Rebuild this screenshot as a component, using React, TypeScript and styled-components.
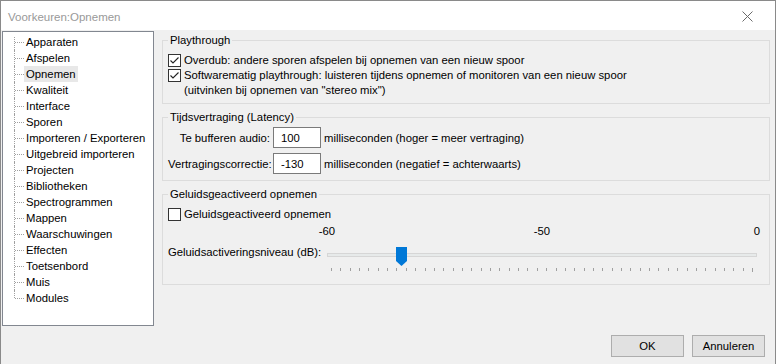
import styled, { createGlobalStyle } from 'styled-components'

const GlobalStyle = createGlobalStyle`
    html, body {
        margin: 0;
        padding: 0;
    }
    body {
        width: 776px;
        height: 364px;
        overflow: hidden;
        background: #f0f0f0;
        font-family: "Liberation Sans", Arial, sans-serif;
        font-size: 11.3px;
        color: #000;
    }
`

const treeItems = [
    'Apparaten',
    'Afspelen',
    'Opnemen',
    'Kwaliteit',
    'Interface',
    'Sporen',
    'Importeren / Exporteren',
    'Uitgebreid importeren',
    'Projecten',
    'Bibliotheken',
    'Spectrogrammen',
    'Mappen',
    'Waarschuwingen',
    'Effecten',
    'Toetsenbord',
    'Muis',
    'Modules',
]

type Place = 'first' | 'mid' | 'last'

const CheckBox: React.FC<{ checked?: boolean }> = ({ checked }) => (
    <BoxStyled>
        {checked && (
            <svg width="11" height="11" viewBox="0 0 11 11">
                <polyline points="1.5,5.5 4,8 9.5,2.5" fill="none" stroke="#222" strokeWidth="1.1" />
            </svg>
        )}
    </BoxStyled>
)

const Thumb = () => (
    <ThumbStyled style={{ left: '16%' }}>
        <svg width="11" height="19" viewBox="0 0 11 19">
            <path d="M0 0 H11 V14 L5.5 19 L0 14 Z" fill="#0078d7" />
        </svg>
    </ThumbStyled>
)

const Ticks = () => {
    const count = 46
    const step = 421 / (count - 1)
    return (
        <svg width="430" height="4" viewBox="0 0 430 4">
            {Array.from({ length: count }).map((_, i) => {
                const x = Math.round(4 + i * step) + 0.5
                return <line key={i} x1={x} x2={x} y1={0} y2={i === count - 1 ? 4 : 3} stroke="#a0a0a0" strokeWidth="1" />
            })}
        </svg>
    )
}

const App = () => {
    return (
        <>
            <GlobalStyle />
            <Window>
                <TitleBar>
                    <Title>Voorkeuren:Opnemen</Title>
                    <svg width="11" height="11" viewBox="0 0 11 11">
                        <path d="M0.5 0.5 L10.5 10.5 M10.5 0.5 L0.5 10.5" stroke="#6a6a6a" strokeWidth="1" />
                    </svg>
                </TitleBar>
                <Main>
                    <Tree>
                        {treeItems.map((item, idx) => {
                            const place: Place = idx === 0 ? 'first' : idx === treeItems.length - 1 ? 'last' : 'mid'
                            return (
                                <TreeRow key={item}>
                                    <Connector $place={place} />
                                    <TreeLabel $selected={item === 'Opnemen'}>{item}</TreeLabel>
                                </TreeRow>
                            )
                        })}
                    </Tree>
                    <Panel>
                        <Group>
                            <Legend>Playthrough</Legend>
                            <CheckList>
                                <CheckRow>
                                    <CheckBox checked />
                                    <CheckText>Overdub: andere sporen afspelen bij opnemen van een nieuw spoor</CheckText>
                                </CheckRow>
                                <CheckRow>
                                    <CheckBox checked />
                                    <CheckText>
                                        Softwarematig playthrough: luisteren tijdens opnemen of monitoren van een nieuw spoor
                                        <br />
                                        (uitvinken bij opnemen van "stereo mix")
                                    </CheckText>
                                </CheckRow>
                            </CheckList>
                        </Group>
                        <Group>
                            <Legend>Tijdsvertraging (Latency)</Legend>
                            <FieldGrid>
                                <FieldLabel>Te bufferen audio:</FieldLabel>
                                <Input defaultValue="100" />
                                <span>milliseconden (hoger = meer vertraging)</span>
                                <FieldLabel>Vertragingscorrectie:</FieldLabel>
                                <Input defaultValue="-130" />
                                <span>milliseconden (negatief = achterwaarts)</span>
                            </FieldGrid>
                        </Group>
                        <Group $last>
                            <Legend>Geluidsgeactiveerd opnemen</Legend>
                            <CheckList>
                                <CheckRow>
                                    <CheckBox />
                                    <CheckText>Geluidsgeactiveerd opnemen</CheckText>
                                </CheckRow>
                            </CheckList>
                            <LevelGrid>
                                <span />
                                <Scale>
                                    <ScaleMark>-60</ScaleMark>
                                    <ScaleMark>-50</ScaleMark>
                                    <ScaleMark>0</ScaleMark>
                                </Scale>
                                <LevelLabel>Geluidsactiveringsniveau (dB):</LevelLabel>
                                <Slider>
                                    <TrackArea>
                                        <Track />
                                        <Thumb />
                                    </TrackArea>
                                    <Ticks />
                                </Slider>
                            </LevelGrid>
                        </Group>
                    </Panel>
                </Main>
                <Footer>
                    <Button>OK</Button>
                    <Button>Annuleren</Button>
                </Footer>
            </Window>
        </>
    )
}

export default App

const Window = styled.div`
    width: 776px;
    height: 364px;
    box-sizing: border-box;
    border: 1px solid #8a8a8a;
    border-bottom: none;
    background: #f0f0f0;
    display: flex;
    flex-direction: column;
`

const TitleBar = styled.div`
    height: 29px;
    flex-shrink: 0;
    background: #fff;
    display: flex;
    align-items: center;
    justify-content: space-between;
    padding: 2px 22px 0 7px;
    box-sizing: border-box;
`

const Title = styled.span`
    color: #999;
    font-size: 11.5px;
`

const Main = styled.div`
    height: 296px;
    display: flex;
    gap: 8px;
    padding: 0 5px 0 1px;
`

const Tree = styled.ul`
    margin: 1px 0 0;
    padding: 2px 0 0;
    list-style: none;
    width: 152px;
    height: 295px;
    box-sizing: border-box;
    flex-shrink: 0;
    background: #fff;
    border: 1px solid #828790;
`

const TreeRow = styled.li`
    height: 16px;
    display: flex;
    align-items: center;
`

const Connector = styled.span<{ $place: Place }>`
    position: relative;
    width: 10px;
    height: 16px;
    margin-left: 11px;
    flex-shrink: 0;

    &::before {
        content: '';
        position: absolute;
        left: 0;
        top: ${({ $place }) => ($place === 'first' ? '3px' : '0')};
        bottom: ${({ $place }) => ($place === 'last' ? '8px' : '0')};
        border-left: 1px dotted #a0a0a0;
    }
    &::after {
        content: '';
        position: absolute;
        left: 1px;
        right: 0;
        top: 8px;
        border-top: 1px dotted #a0a0a0;
    }
`

const TreeLabel = styled.span<{ $selected?: boolean }>`
    padding: 0 2px;
    line-height: 16px;
    white-space: nowrap;
    background: ${({ $selected }) => ($selected ? '#e8e8e8' : 'transparent')};
`

const Panel = styled.div`
    flex: 1;
    display: flex;
    flex-direction: column;
    gap: 1px;
    padding-top: 3px;
`

const Group = styled.fieldset<{ $last?: boolean }>`
    margin: 0 0 5px;
    padding: 0 5px ${({ $last }) => ($last ? '12px' : '5px')};
    min-width: 0;
    border: 1px solid #dcdcdc;
`

const Legend = styled.legend`
    padding: 0 2px;
    line-height: 14px;
`

const CheckList = styled.div`
    display: flex;
    flex-direction: column;
    padding-top: 6px;
`

const CheckRow = styled.label`
    display: flex;
    align-items: flex-start;
    gap: 3px;
    line-height: 15px;
`

const BoxStyled = styled.span`
    width: 13px;
    height: 13px;
    margin-top: 1px;
    box-sizing: border-box;
    border: 1px solid #333;
    background: #fff;
    display: flex;
    align-items: center;
    justify-content: center;
    flex-shrink: 0;
`

const CheckText = styled.span`
    white-space: nowrap;
`

const FieldGrid = styled.div`
    display: grid;
    grid-template-columns: 102px 48px auto;
    column-gap: 3px;
    row-gap: 5px;
    align-items: center;
    padding-top: 3px;
    padding-bottom: 1px;
`

const FieldLabel = styled.span`
    text-align: right;
    white-space: nowrap;
`

const Input = styled.input`
    width: 48px;
    height: 21px;
    box-sizing: border-box;
    border: 1px solid #7a7a7a;
    background: #fff;
    padding: 0 0 0 7px;
    font-family: "Liberation Sans", Arial, sans-serif;
    font-size: 11.3px;
    color: #000;
    outline: none;
`

const LevelGrid = styled.div`
    display: grid;
    grid-template-columns: 159px 430px;
    align-items: start;
    padding-top: 2px;
`

const Scale = styled.div`
    display: flex;
    justify-content: space-between;
    margin: 0 -10px 7px;
    line-height: 14px;
`

const ScaleMark = styled.span`
    width: 20px;
    text-align: center;
`

const LevelLabel = styled.span`
    line-height: 14px;
    white-space: nowrap;
`

const Slider = styled.div`
    display: flex;
    flex-direction: column;
    gap: 2px;
    padding-top: 2px;
`

const TrackArea = styled.div`
    position: relative;
    height: 19px;
`

const Track = styled.div`
    margin-top: 6px;
    height: 4px;
    box-sizing: border-box;
    background: #e7eaea;
    border: 1px solid #d6d6d6;
`

const ThumbStyled = styled.div`
    position: absolute;
    top: 0;
    width: 11px;
    height: 19px;
    line-height: 0;
`

const Footer = styled.div`
    display: flex;
    justify-content: flex-end;
    gap: 8px;
    padding: 9px 10px 0 0;
`

const Button = styled.button`
    width: 73px;
    height: 22px;
    box-sizing: border-box;
    border: 1px solid #adadad;
    background: #e1e1e1;
    font-family: "Liberation Sans", Arial, sans-serif;
    font-size: 11.3px;
    color: #000;
    padding: 0;
`
